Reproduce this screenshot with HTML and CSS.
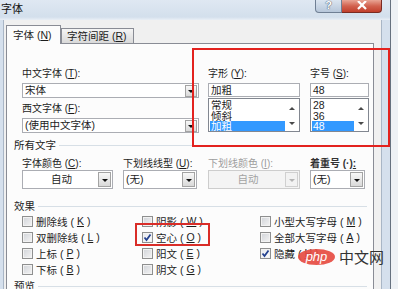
FILE: index.html
```html
<!DOCTYPE html>
<html lang="zh-CN">
<head>
  <meta charset="UTF-8" />
  <title>字体</title>
  <link rel="stylesheet" href="styles.css">
</head>
<body>

  <div class="window">
    <div class="titlebar">
      <span class="title">字体</span>
      <div class="caption-btns">
        <span class="btn-help">?</span>
        <span class="btn-close">
          <svg width="12" height="9" viewBox="0 0 12 9"><path d="M2 0 L10 8 M10 0 L2 8" stroke="#fff" stroke-width="2.2" fill="none"/></svg>
        </span>
      </div>
    </div>

    <div class="client">
      <div class="tabs">
        <div class="tab active">字体 (<u>N</u>)</div>
        <div class="tab">字符间距 (<u>R</u>)</div>
      </div>

      <div class="panel">
        <div class="font-row">
          <div class="col-cn">
            <div class="lbl">中文字体 (<u>T</u>):</div>
            <div class="combo"><span>宋体</span><i class="drop"></i></div>
            <div class="lbl second">西文字体 (<u>F</u>):</div>
            <div class="combo"><span>(使用中文字体)</span><i class="drop"></i></div>
          </div>
          <div class="col-style">
            <div class="lbl">字形 (<u>Y</u>):</div>
            <div class="field">加粗</div>
            <div class="list">
              <div class="items">
                <div>常规</div>
                <div>倾斜</div>
                <div class="sel">加粗</div>
              </div>
              <div class="scroll"><i class="up"></i><i class="down"></i></div>
            </div>
          </div>
          <div class="col-size">
            <div class="lbl">字号 (<u>S</u>):</div>
            <div class="field">48</div>
            <div class="list">
              <div class="items">
                <div>28</div>
                <div>36</div>
                <div class="sel">48</div>
              </div>
              <div class="scroll"><i class="up"></i><i class="down"></i></div>
            </div>
          </div>
        </div>

        <div class="group all-head">所有文字</div>
        <div class="all-row">
          <div class="fcol w-color">
            <div class="lbl small">字体颜色 (<u>C</u>):</div>
            <div class="combo big center"><span>自动</span><i class="drop"></i></div>
          </div>
          <div class="fcol w-line">
            <div class="lbl small">下划线线型 (<u>U</u>):</div>
            <div class="combo big"><span>(无)</span><i class="drop"></i></div>
          </div>
          <div class="fcol w-ucolor">
            <div class="lbl small off">下划线颜色 (<u>I</u>):</div>
            <div class="combo big center disabled"><span>自动</span><i class="drop"></i></div>
          </div>
          <div class="fcol w-dot">
            <div class="lbl small">着重号 (·)<u>:</u></div>
            <div class="combo big"><span>(无)</span><i class="drop"></i></div>
          </div>
        </div>

        <div class="group fx-head">效果</div>
        <div class="effects">
          <label class="chk"><span class="box"></span>删除线 (<u>K</u>)</label>
          <label class="chk"><span class="box"></span>阴影 (<u>W</u>)</label>
          <label class="chk"><span class="box"></span>小型大写字母 (<u>M</u>)</label>

          <label class="chk"><span class="box"></span>双删除线 (<u>L</u>)</label>
          <label class="chk"><span class="box on"><svg width="9" height="9" viewBox="0 0 9 9"><path d="M1.5 4.5 L3.5 7 L7.5 1.5" stroke="#23418f" stroke-width="1.8" fill="none"/></svg></span>空心 (<u>O</u>)</label>
          <label class="chk"><span class="box"></span>全部大写字母 (<u>A</u>)</label>

          <label class="chk"><span class="box"></span>上标 (<u>P</u>)</label>
          <label class="chk"><span class="box"></span>阳文 (<u>E</u>)</label>
          <label class="chk"><span class="box on"><svg width="9" height="9" viewBox="0 0 9 9"><path d="M1.5 4.5 L3.5 7 L7.5 1.5" stroke="#23418f" stroke-width="1.8" fill="none"/></svg></span>隐藏 (<u>H</u>)</label>

          <label class="chk"><span class="box"></span>下标 (<u>B</u>)</label>
          <label class="chk"><span class="box"></span>阴文 (<u>G</u>)</label>
        </div>

        <div class="group view-head">预览</div>
      </div>
    </div>
  </div>

  <!-- annotation overlays -->
  <div class="mark mark-style"></div>
  <div class="mark mark-hollow"></div>

  <div class="watermark">
    <span class="php">php</span>
    <span class="cn">中文网</span>
  </div>

</body>
</html>
```

FILE: styles.css
```css
* {
  box-sizing: border-box;
}

body {
  margin: 0;
  width: 398px;
  height: 289px;
  overflow: hidden;
  position: relative;
  background: #eef1f5;
  font-family: "Liberation Sans", "Noto Sans CJK SC", sans-serif;
  font-size: 10px;
  color: #1c1c1c;
}

u {
  text-decoration-thickness: 1px;
  text-underline-offset: 1px;
}

.window {
  width: 391px;
  height: 289px;
  display: flex;
  flex-direction: column;
  background: #d5e0ed;
  border-right: 1px solid #66717f;
}

/* title bar */
.titlebar {
  height: 20px;
  flex-shrink: 0;
  display: flex;
  align-items: flex-start;
  background: linear-gradient(#dfe8f2, #d3dfec 85%, #e9eff6);
}

.title {
  font-size: 11px;
  line-height: 18px;
  padding-left: 1px;
  color: #111;
}

.caption-btns {
  margin-left: auto;
  margin-right: 8px;
  display: flex;
}

.btn-help,
.btn-close {
  height: 13px;
  display: flex;
  align-items: flex-start;
  justify-content: center;
  border: 1px solid #6f7f94;
  border-top: none;
}

.btn-help {
  width: 27px;
  border-radius: 0 0 0 4px;
  background: linear-gradient(#dbe5f0, #b7c7da);
  color: #fff;
  font-weight: bold;
  font-size: 11px;
  line-height: 10px;
  text-shadow: 0 0 1px #3f5069, 0 0 1px #3f5069;
}

.btn-close {
  width: 40px;
  border-color: #7a2b22;
  border-left: none;
  border-radius: 0 0 4px 0;
  background: linear-gradient(#e9a595, #d2624f 50%, #c13f2c);
  padding-top: 1px;
}

/* dialog body */
.client {
  flex: 1;
  margin-left: 3px;
  margin-right: 8px;
  background: #f0f0f0;
  border-left: 1px solid #a9b6c6;
  border-right: 1px solid #a9b6c6;
  padding: 5px 7px 0 2px;
  display: flex;
  flex-direction: column;
}

.tabs {
  height: 18px;
  flex-shrink: 0;
  display: flex;
  align-items: flex-end;
}

.tab {
  width: 73px;
  height: 15px;
  padding: 1px 0 0 5px;
  border: 1px solid #898c95;
  border-bottom: none;
  background: linear-gradient(#f5f5f5, #e7e7e7 50%, #d9d9d9);
  font-size: 10.5px;
  line-height: 13px;
  white-space: nowrap;
}

.tab.active {
  width: 55px;
  height: 19px;
  margin-bottom: -1px;
  position: relative;
  padding: 2px 0 0 6px;
  background: #fcfcfc;
  line-height: 15px;
}

.panel {
  flex: 1;
  border: 1px solid #898c95;
  background: #fcfcfc;
  padding: 22px 0 0 7px;
}

/* font row */
.font-row {
  display: flex;
  padding-left: 8px;
}

.col-cn {
  width: 177px;
  margin-right: 9px;
}

.col-style {
  width: 92px;
  margin-right: 10px;
}

.col-size {
  width: 59px;
}

.lbl {
  height: 16px;
  line-height: 16px;
  white-space: nowrap;
}

.lbl.second {
  margin-top: 3px;
}

.lbl.small {
  height: 13px;
  line-height: 13px;
}

.lbl.off {
  color: #9c9c9c;
}

.combo {
  height: 15px;
  margin-top: 1px;
  display: flex;
  align-items: center;
  background: #fff;
  border: 1px solid #abadb3;
  padding-left: 2px;
  font-size: 10.5px;
  line-height: 13px;
  white-space: nowrap;
}

.combo.big {
  height: 19px;
  margin-top: 0;
}

.combo.center span {
  flex: 1;
  text-align: center;
}

.combo .drop {
  margin-left: auto;
  margin-right: 1px;
  width: 12px;
  height: 12px;
  flex-shrink: 0;
  display: flex;
  align-items: center;
  justify-content: center;
  border: 1px solid #a3a3a3;
  background: linear-gradient(#f8f8f8, #d9d9d9);
}

.combo.big .drop {
  width: 13px;
  height: 15px;
}

.combo .drop::after {
  content: "";
  border-left: 3px solid transparent;
  border-right: 3px solid transparent;
  border-top: 3px solid #111;
  margin-top: 2px;
}

.combo.disabled {
  background: #f4f4f4;
  border-color: #cdcdcd;
  color: #a3a3a3;
}

.combo.disabled .drop {
  border-color: #d0d0d0;
  background: #f2f2f2;
}

.combo.disabled .drop::after {
  border-top-color: #b4b4b4;
}

.field {
  height: 14px;
  margin-top: 1px;
  border: 1px solid #abadb3;
  background: #fff;
  padding-left: 2px;
  font-size: 10.5px;
  line-height: 12px;
}

.list {
  height: 34px;
  margin-top: 1px;
  display: flex;
  overflow: hidden;
  border: 1px solid #828790;
  background: #fff;
}

.items {
  flex: 1;
  padding: 1px 0 0 1px;
}

.items div {
  height: 10.5px;
  line-height: 10.5px;
  padding-left: 1px;
  font-size: 10.5px;
}

.items .sel {
  background: #3399ff;
  color: #fff;
}

.scroll {
  width: 14px;
  display: flex;
  flex-direction: column;
  justify-content: space-between;
  align-items: center;
  padding: 8px 0 6px;
}

.scroll .up {
  border-left: 3px solid transparent;
  border-right: 3px solid transparent;
  border-bottom: 3px solid #4a4a4a;
}

.scroll .down {
  border-left: 3px solid transparent;
  border-right: 3px solid transparent;
  border-top: 3px solid #4a4a4a;
}

/* groups */
.group {
  height: 14px;
  line-height: 14px;
  display: flex;
  align-items: center;
  gap: 3px;
  font-size: 10.5px;
}

.group::after {
  content: "";
  flex: 1;
  height: 1px;
  margin-right: 6px;
  background: #d7dfe6;
}

.all-head {
  margin-top: 5px;
}

.fx-head {
  margin-top: 10px;
}

.view-head {
  margin-top: 2px;
}

.all-row {
  display: flex;
  padding-left: 8px;
  margin-top: 5px;
}

.w-color {
  width: 91px;
  margin-right: 10px;
}

.w-line {
  width: 74px;
  margin-right: 11px;
}

.w-ucolor {
  width: 92px;
  margin-right: 10px;
}

.w-dot {
  width: 55px;
}

.w-dot .lbl {
  font-weight: bold;
  color: #333;
}

/* effects */
.effects {
  display: grid;
  grid-template-columns: 120px 118px auto;
  grid-auto-rows: 16px;
  padding-left: 8px;
}

.chk {
  display: flex;
  align-items: center;
  gap: 3px;
  white-space: nowrap;
  font-size: 10.5px;
}

.box {
  width: 11px;
  height: 11px;
  flex-shrink: 0;
  display: flex;
  align-items: center;
  justify-content: center;
  border: 1px solid #8e8f8f;
  background: linear-gradient(135deg, #d0d3d8, #f4f4f4);
  box-shadow: inset 0 0 0 1px #f2f2f2;
}

.box.on {
  background: linear-gradient(135deg, #e6e8ec, #fdfdfd);
}

/* overlays */
.mark {
  position: absolute;
  border: 2px solid #e3221f;
}

.mark-style {
  left: 192px;
  top: 48px;
  width: 198px;
  height: 99px;
}

.mark-hollow {
  left: 135px;
  top: 223px;
  width: 75px;
  height: 23px;
  border-color: #d92d28;
}

.watermark {
  position: absolute;
  left: 298px;
  top: 249px;
  display: flex;
  align-items: center;
  gap: 4px;
}

.watermark .php {
  width: 37px;
  height: 16px;
  border-radius: 50%;
  background: rgba(230, 76, 66, 0.92);
  color: #fff;
  font-style: italic;
  font-size: 13px;
  line-height: 15px;
  text-align: center;
}

.watermark .cn {
  font-family: "Noto Sans CJK SC", sans-serif;
  font-size: 15px;
  line-height: 16px;
  color: #333;
}
```
